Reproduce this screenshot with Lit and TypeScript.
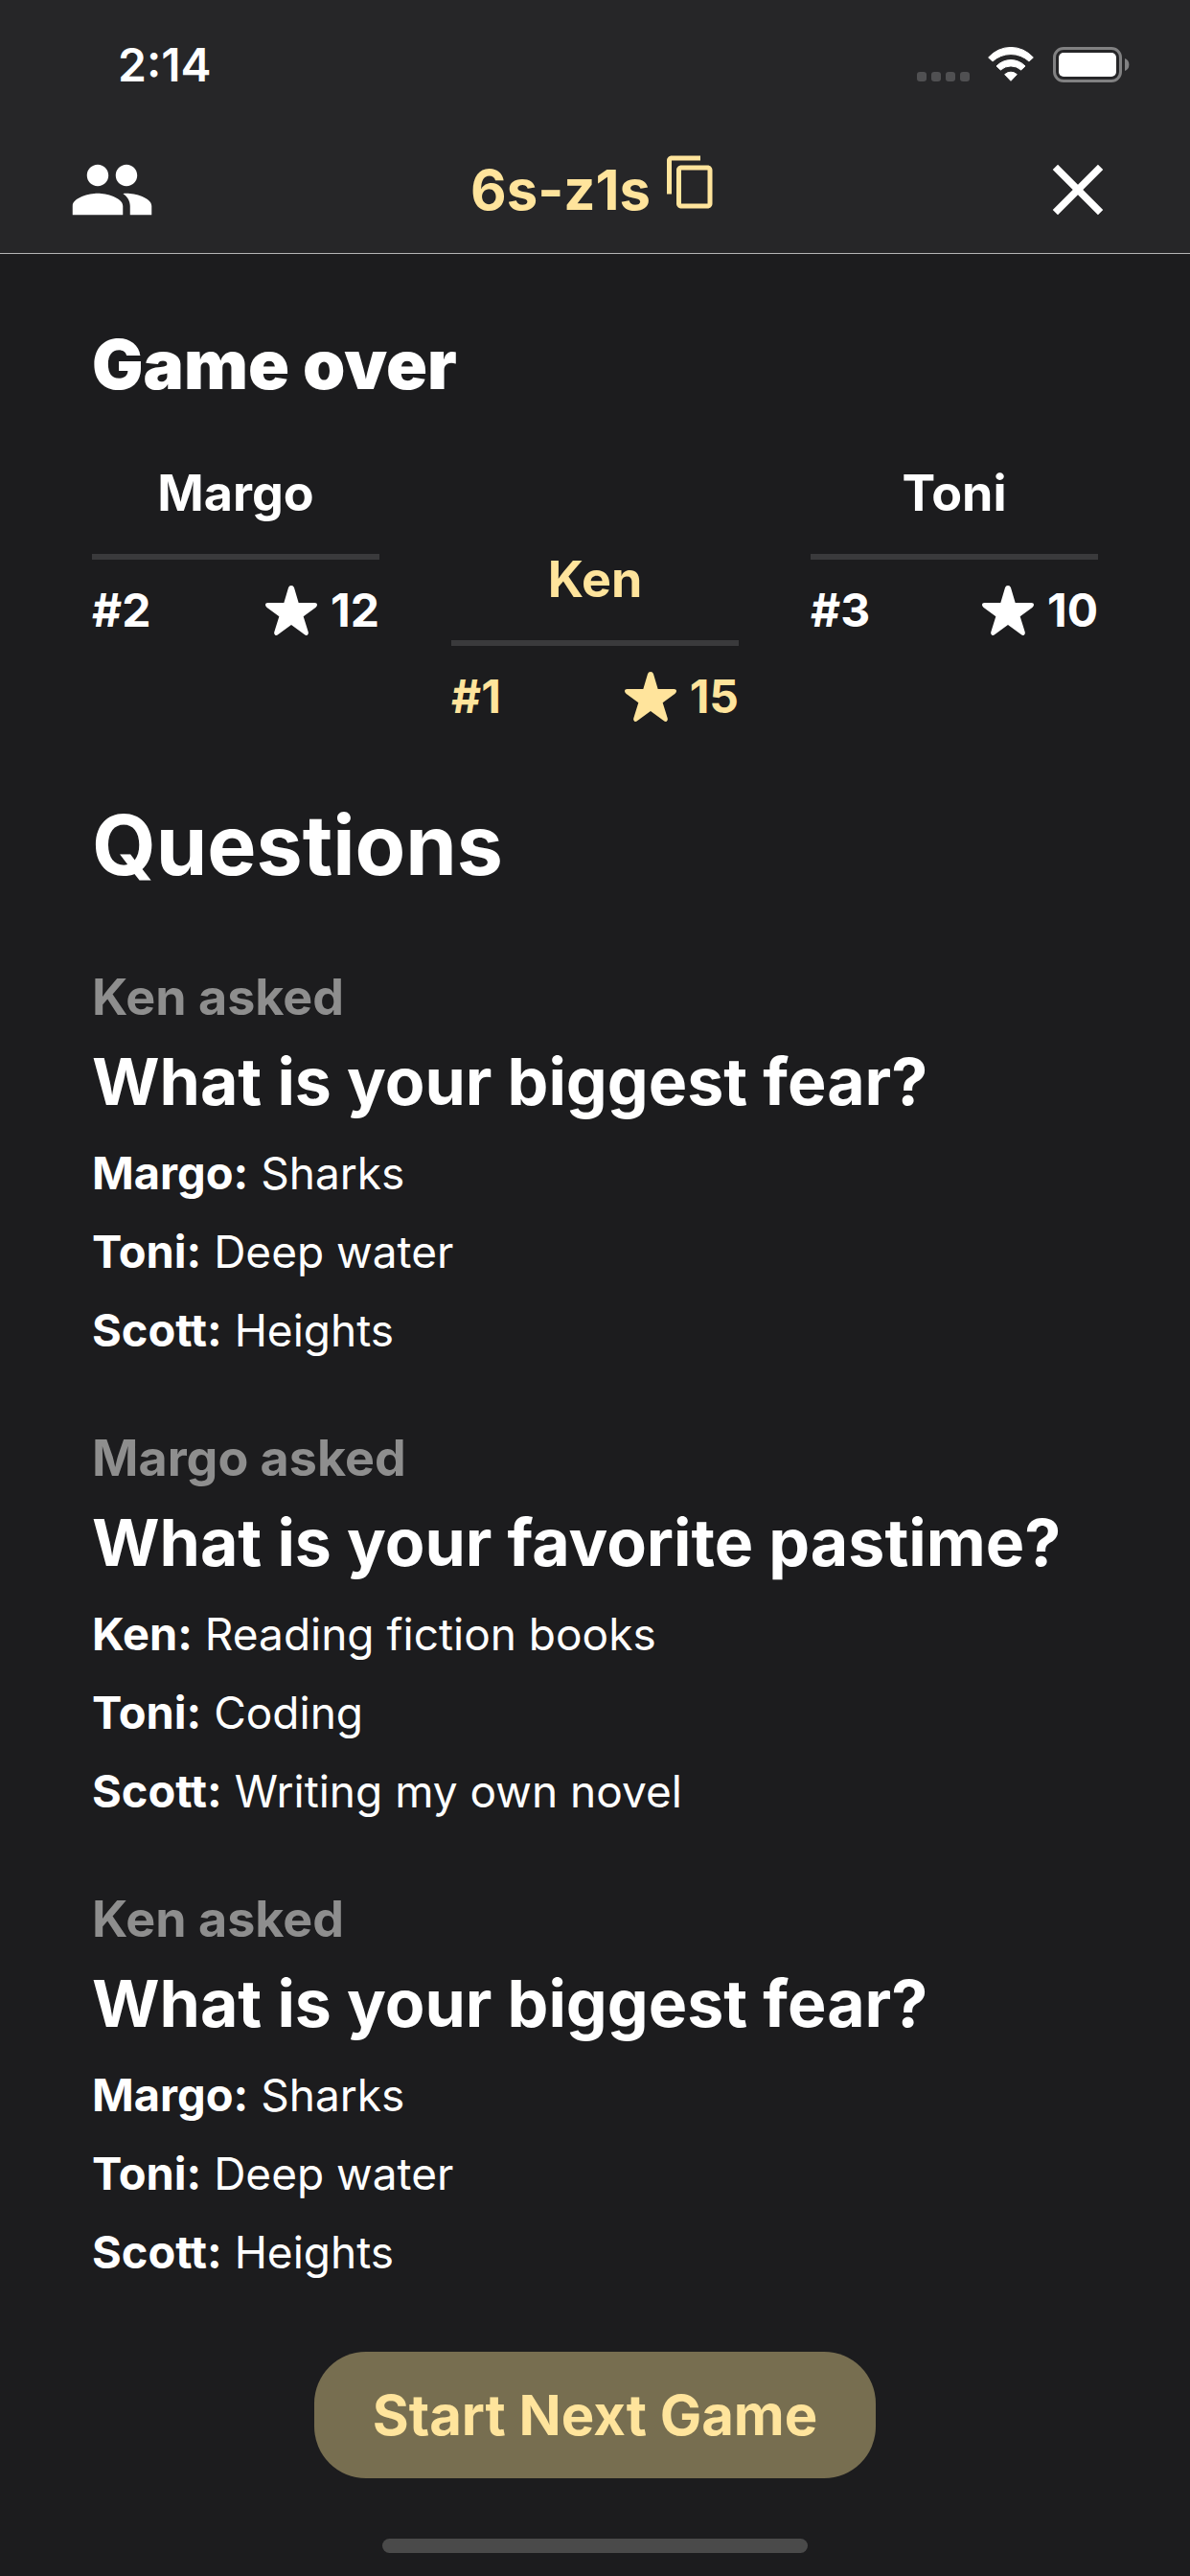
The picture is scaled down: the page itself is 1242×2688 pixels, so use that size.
import { LitElement, html, css, svg } from "lit";
import { customElement, property } from "lit/decorators.js";
import { classMap } from "lit/directives/class-map.js";

interface Player {
  name: string;
  rank: number;
  score: number;
  winner?: boolean;
}

interface Answer {
  name: string;
  text: string;
}

interface Round {
  asker: string;
  question: string;
  answers: Answer[];
}

const PLAYERS: Player[] = [
  { name: "Margo", rank: 2, score: 12 },
  { name: "Ken", rank: 1, score: 15, winner: true },
  { name: "Toni", rank: 3, score: 10 },
];

const FEAR: Round = {
  asker: "Ken",
  question: "What is your biggest fear?",
  answers: [
    { name: "Margo", text: "Sharks" },
    { name: "Toni", text: "Deep water" },
    { name: "Scott", text: "Heights" },
  ],
};

const PASTIME: Round = {
  asker: "Margo",
  question: "What is your favorite pastime?",
  answers: [
    { name: "Ken", text: "Reading fiction books" },
    { name: "Toni", text: "Coding" },
    { name: "Scott", text: "Writing my own novel" },
  ],
};

const ROUNDS: Round[] = [FEAR, PASTIME, FEAR];

const peoplePath = svg`<path d="M16 11c1.66 0 2.99-1.34 2.99-3S17.66 5 16 5c-1.66 0-3 1.34-3 3s1.34 3 3 3zm-8 0c1.66 0 2.99-1.34 2.99-3S9.66 5 8 5C6.34 5 5 6.34 5 8s1.34 3 3 3zm0 2c-2.33 0-7 1.17-7 3.5V19h14v-2.5c0-2.33-4.67-3.5-7-3.5zm8 0c-.29 0-.62.02-.97.05 1.16.84 1.97 1.97 1.97 3.45V19h6v-2.5c0-2.33-4.67-3.5-7-3.5z"/>`;
const closePath = svg`<path d="M19 6.41L17.59 5 12 10.59 6.41 5 5 6.41 10.59 12 5 17.59 6.41 19 12 13.41 17.59 19 19 17.59 13.41 12z"/>`;
const copyPath = svg`<path d="M16 1H4c-1.1 0-2 .9-2 2v14h2V3h12V1zm3 4H8c-1.1 0-2 .9-2 2v14c0 1.1.9 2 2 2h11c1.1 0 2-.9 2-2V7c0-1.1-.9-2-2-2zm0 16H8V7h11v14z"/>`;

@customElement("status-bar")
export class StatusBar extends LitElement {
  static styles = css`
    :host {
      display: flex;
      justify-content: space-between;
      height: 132px;
      padding: 0 63px 0 123px;
      box-sizing: border-box;
    }
    .time {
      padding-top: 38px;
      font-size: 48px;
      line-height: 60px;
      font-weight: 600;
    }
    .indicators {
      display: flex;
      align-items: flex-end;
      height: 86px;
    }
    .cell {
      width: 55px;
      height: 11px;
      margin-right: 19px;
    }
    .wifi {
      width: 48px;
      height: 37px;
      margin-right: 20px;
    }
    .battery {
      width: 80px;
      height: 37px;
    }
  `;

  render() {
    return html`
      <div class="time">2:14</div>
      <div class="indicators">
        <svg class="cell" viewBox="0 0 55 11" fill="#505052" aria-hidden="true">
          ${[0, 15, 30, 45].map((x) => svg`<rect x=${x} y="0" width="10" height="10" rx="3"/>`)}
        </svg>
        <svg class="wifi" viewBox="0 0 144 111" fill="#fff" stroke="#fff" stroke-width="3" stroke-linejoin="round" aria-hidden="true">
          <path d="M2 33A93 93 0 0 1 142 33L129 45A84 84 0 0 0 15 45Z"/>
          <path d="M27 60A62 62 0 0 1 117 60L104 72A48 48 0 0 0 40 72Z"/>
          <path d="M53 86A28 28 0 0 1 91 86L72 106Z"/>
        </svg>
        <svg class="battery" viewBox="0 0 80 37" aria-hidden="true">
          <rect x="1.5" y="1.5" width="69" height="34" rx="9.5" fill="none" stroke="#818182" stroke-width="3"/>
          <rect x="6" y="6" width="60" height="25" rx="5" fill="#fff"/>
          <path d="M75 12a7 7 0 0 1 0 13z" fill="#818182"/>
        </svg>
      </div>
    `;
  }
}

@customElement("player-score")
export class PlayerScore extends LitElement {
  static styles = css`
    :host {
      display: block;
    }
    .player {
      color: #fff;
    }
    .winner {
      padding-top: 90px;
      color: #ffe49c;
    }
    .name {
      padding-bottom: 31px;
      border-bottom: 6px solid #3a3a3c;
      font-size: 52px;
      line-height: 64px;
      font-weight: 700;
      text-align: center;
    }
    .result {
      display: flex;
      justify-content: space-between;
      padding-top: 23px;
      font-size: 48px;
      line-height: 60px;
      font-weight: 700;
    }
    .points {
      display: flex;
      align-items: center;
      gap: 14px;
    }
    .star {
      width: 54px;
      height: 52px;
      fill: currentColor;
    }
  `;

  @property({ attribute: false }) player!: Player;

  render() {
    const { name, rank, score, winner } = this.player;
    return html`
      <div class=${classMap({ player: true, winner: !!winner })}>
        <div class="name">${name}</div>
        <div class="result">
          <span>#${rank}</span>
          <span class="points">
            <svg class="star" viewBox="0 0 162 156" aria-hidden="true">
              <path d="M81 0Q88 0 90 7L104 54H154Q162 54 162 61Q162 65 157 69L119 97L134 145Q136 152 131 155Q127 157 122 153L81 123L40 153Q35 157 31 155Q26 152 28 145L43 97L5 69Q0 65 0 61Q0 54 8 54H58L72 7Q74 0 81 0Z"/>
            </svg>
            <span>${score}</span>
          </span>
        </div>
      </div>
    `;
  }
}

@customElement("question-card")
export class QuestionCard extends LitElement {
  static styles = css`
    :host {
      display: block;
    }
    .card {
      display: flex;
      flex-direction: column;
      gap: 7px;
    }
    .asker,
    .question,
    .answers {
      margin: 0;
    }
    .asker {
      color: #8e8e8e;
      font-size: 52px;
      line-height: 64px;
      font-weight: 700;
    }
    .question {
      font-size: 68px;
      line-height: 96px;
      font-weight: 700;
    }
    .answers {
      padding: 0;
      list-style: none;
      font-size: 46px;
      line-height: 82px;
      font-weight: 400;
    }
    .name {
      font-size: 47px;
      font-weight: 700;
      font-variant-ligatures: none;
    }
  `;

  @property({ attribute: false }) round!: Round;

  render() {
    return html`
      <article class="card">
        <p class="asker">${this.round.asker} asked</p>
        <h3 class="question">${this.round.question}</h3>
        <ul class="answers">
          ${this.round.answers.map((a) => html`<li><span class="name">${a.name}:</span> ${a.text}</li>`)}
        </ul>
      </article>
    `;
  }
}

@customElement("app-root")
export class AppRoot extends LitElement {
  static styles = css`
    :host {
      display: flex;
      flex-direction: column;
      min-height: 100vh;
      background: #1c1c1e;
      color: #fff;
      font-family: Inter, "Liberation Sans", sans-serif;
    }
    .header {
      background: #262628;
      border-bottom: 1px solid #b4b4b5;
    }
    .nav {
      display: grid;
      grid-template-columns: 90px 1fr 90px;
      align-items: center;
      height: 132px;
      padding: 0 72px;
    }
    button {
      margin: 0;
      padding: 0;
      border: 0;
      background: none;
      color: inherit;
      font: inherit;
      cursor: pointer;
    }
    .icon {
      display: block;
      width: 90px;
      height: 90px;
      fill: currentColor;
    }
    .room {
      display: flex;
      justify-self: center;
      align-items: flex-start;
      gap: 12px;
      color: #ffe49c;
      font-size: 58px;
      line-height: 76px;
      font-weight: 700;
    }
    .copy {
      width: 60px;
      height: 60px;
      fill: currentColor;
    }
    .content {
      flex: 1;
      padding: 73px 96px 0;
    }
    .title,
    .section {
      margin: 0;
    }
    .title {
      font-size: 71px;
      line-height: 84px;
      font-weight: 900;
    }
    .podium {
      display: grid;
      grid-template-columns: repeat(3, 1fr);
      gap: 75px;
      padding: 61px 0 73px;
    }
    .section {
      font-size: 86px;
      line-height: 104px;
      font-weight: 700;
    }
    .rounds {
      display: flex;
      flex-direction: column;
      gap: 61px;
      padding-top: 75px;
    }
    .footer {
      display: flex;
      flex-direction: column;
      align-items: center;
      gap: 63px;
      padding: 60px 0 24px;
    }
    .start {
      padding: 30px 61px;
      border-radius: 54px;
      background: #776e50;
      color: #ffe49c;
      font-size: 58px;
      line-height: 72px;
      font-weight: 700;
    }
    .home {
      width: 444px;
      height: 15px;
      border-radius: 8px;
      background: #4a4a4a;
    }
  `;

  render() {
    return html`
      <header class="header">
        <status-bar></status-bar>
        <nav class="nav">
          <button type="button" aria-label="Players">
            <svg class="icon" viewBox="0 0 24 24">${peoplePath}</svg>
          </button>
          <button type="button" class="room">
            <span>6s-z1s</span>
            <svg class="copy" viewBox="0 0 24 24" aria-hidden="true">${copyPath}</svg>
          </button>
          <button type="button" aria-label="Close">
            <svg class="icon" viewBox="0 0 24 24">${closePath}</svg>
          </button>
        </nav>
      </header>
      <main class="content">
        <h1 class="title">Game over</h1>
        <div class="podium">
          ${PLAYERS.map((p) => html`<player-score .player=${p}></player-score>`)}
        </div>
        <h2 class="section">Questions</h2>
        <div class="rounds">
          ${ROUNDS.map((r) => html`<question-card .round=${r}></question-card>`)}
        </div>
      </main>
      <footer class="footer">
        <button type="button" class="start">Start Next Game</button>
        <div class="home"></div>
      </footer>
    `;
  }
}
